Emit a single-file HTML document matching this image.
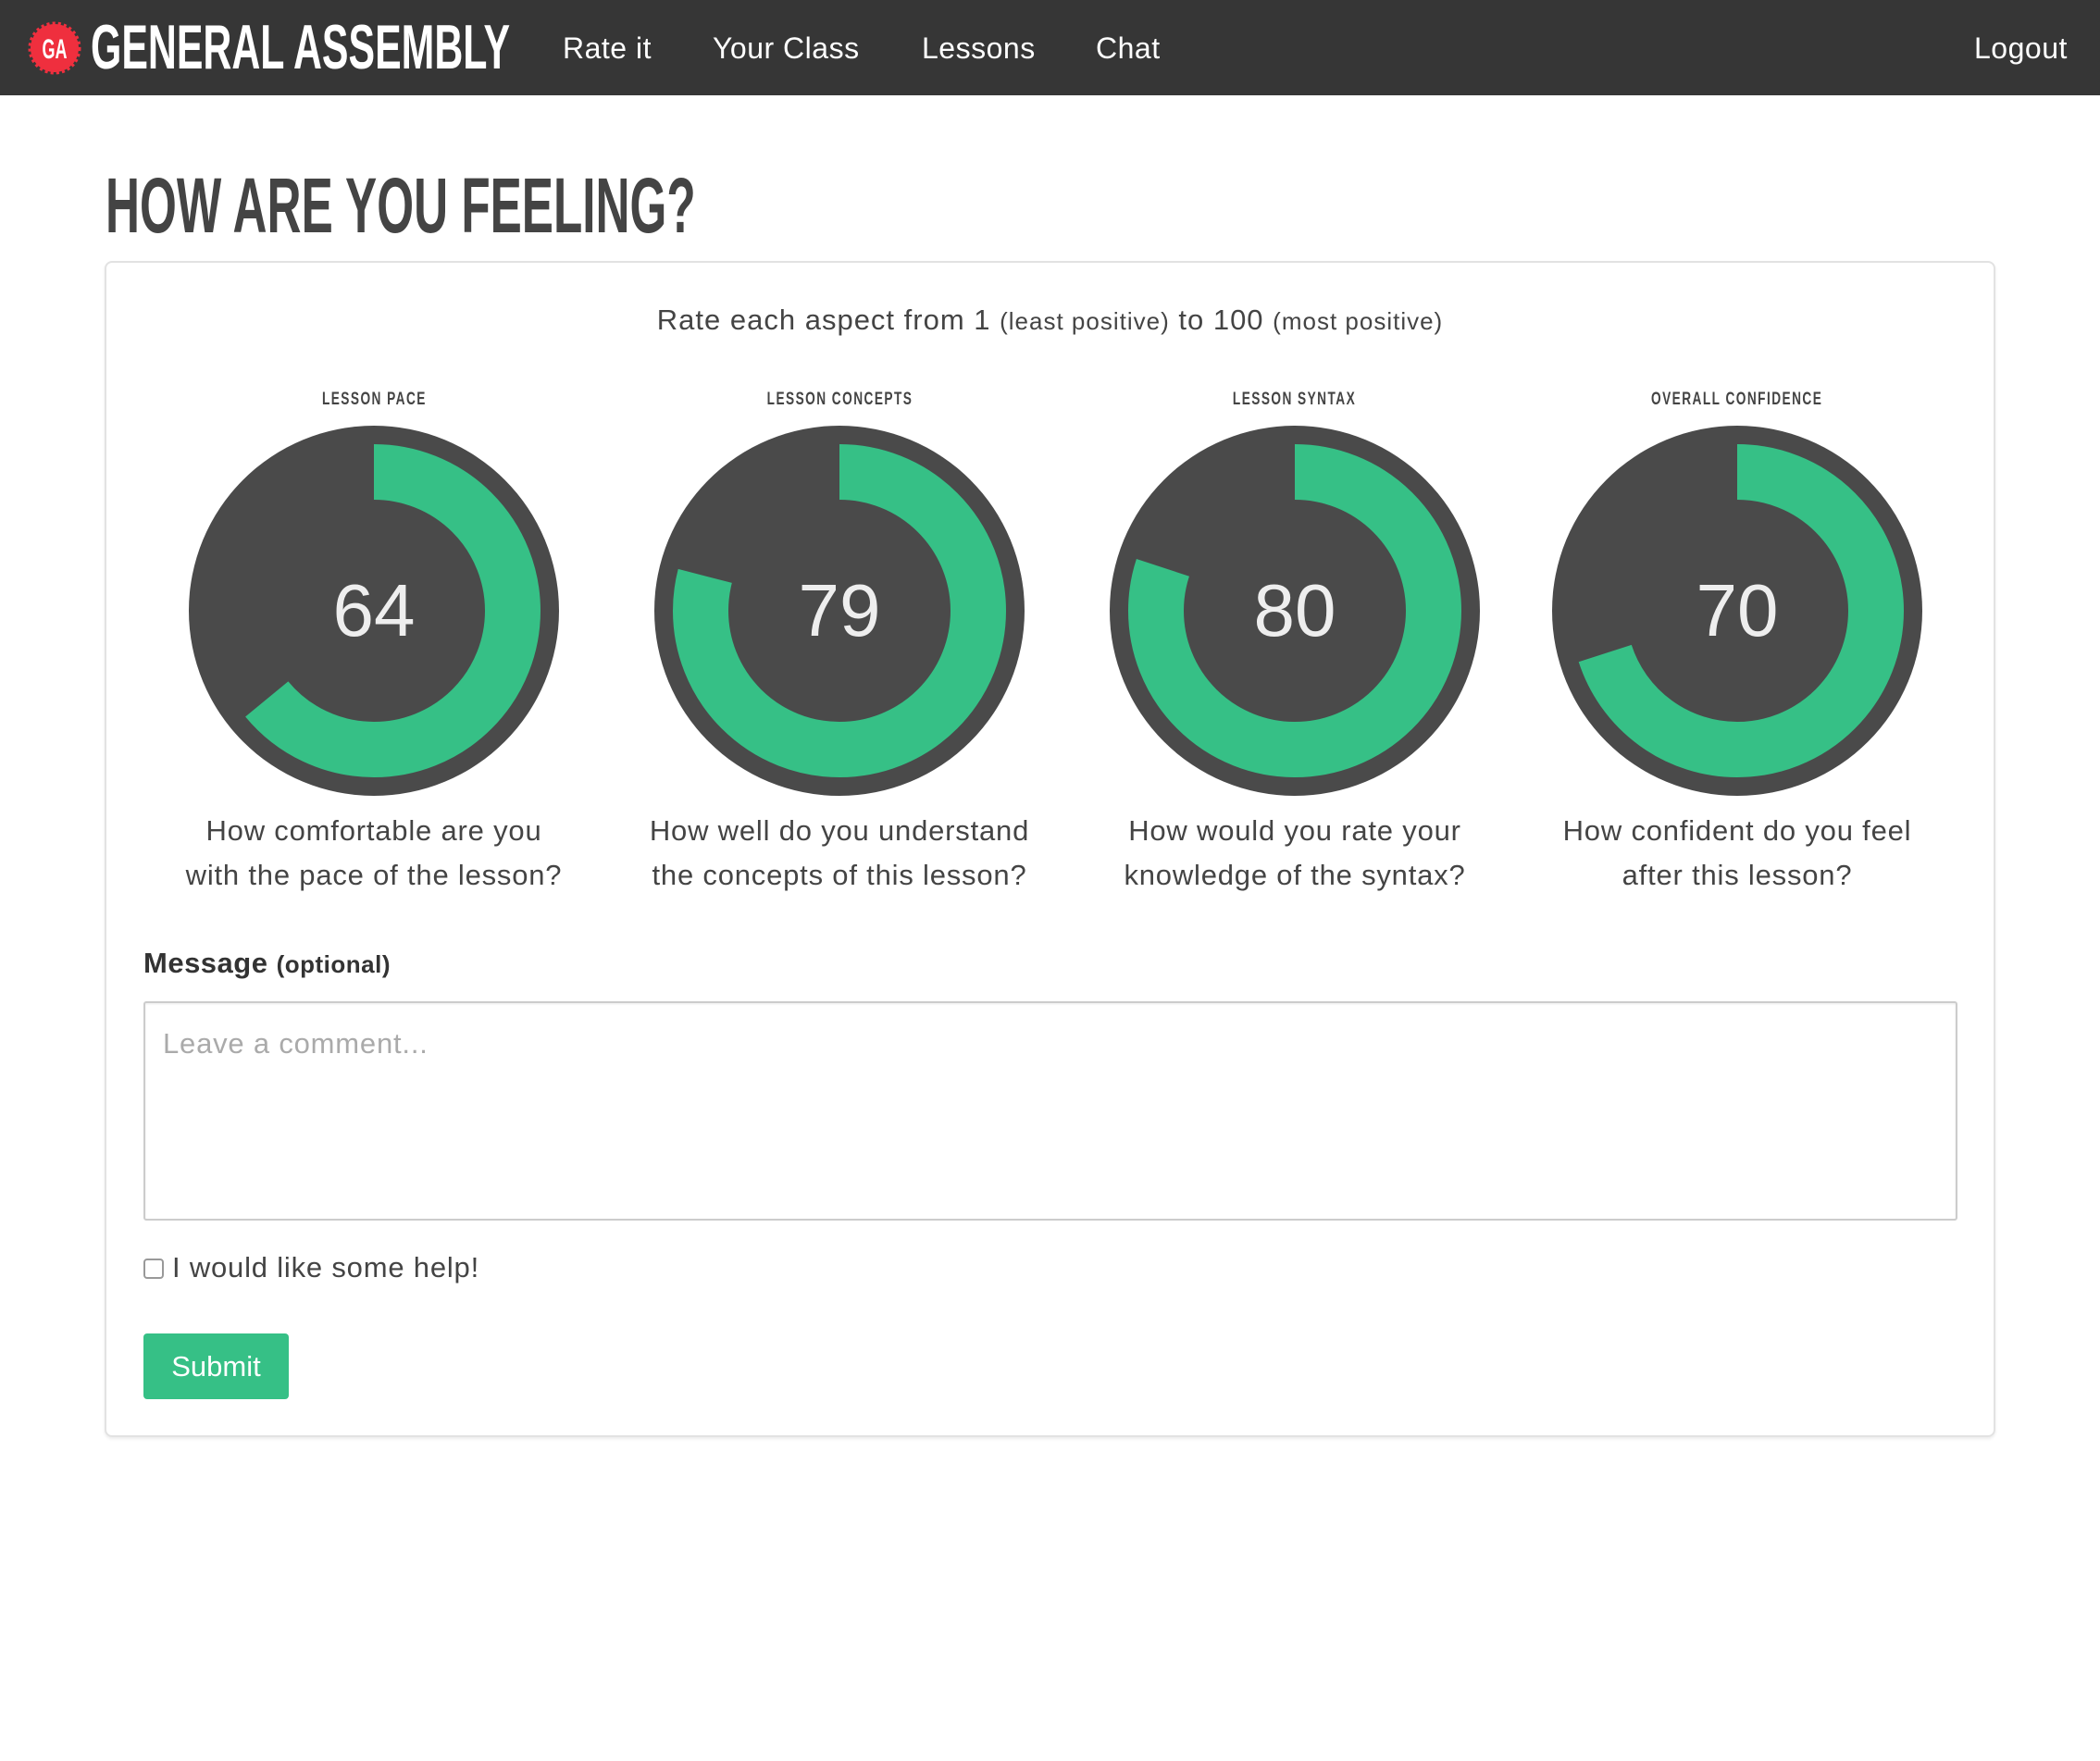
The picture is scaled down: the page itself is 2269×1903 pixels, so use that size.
<!DOCTYPE html>
<html><head><meta charset="utf-8"><style>
*{box-sizing:border-box;margin:0;padding:0}
body{width:2269px;height:1903px;background:#fff;font-family:"Liberation Sans","DejaVu Sans",sans-serif;color:#333;position:relative;overflow:hidden}
.nav{position:absolute;left:0;top:0;width:2269px;height:103px;background:#363636}
.nav a{position:absolute;top:34px;color:#fff;font-size:32px;text-decoration:none;letter-spacing:0.5px}
.cond{display:inline-block;font-weight:bold;transform-origin:left center;white-space:nowrap}
.abs{position:absolute}
.panel{position:absolute;left:113px;top:282px;width:2043px;height:1271px;border:2px solid #e2e2e2;border-radius:8px;box-shadow:0 2px 3px rgba(0,0,0,.08)}
.lbl{position:absolute;width:500px;text-align:center;font-size:19px;font-weight:bold;color:#444;letter-spacing:2px}
.lbl span{display:inline-block;transform:scaleX(0.72)}
.q{position:absolute;width:500px;text-align:center;font-size:31px;line-height:48px;color:#444;letter-spacing:0.8px}
</style></head><body>
<div class="nav">
<svg class="abs" style="left:30px;top:23px" width="58" height="58" viewBox="0 0 58 58">
<circle cx="29" cy="29" r="26" fill="#ef2f3e" stroke="#ef2f3e" stroke-width="5" stroke-dasharray="3 3"/>
<text x="29" y="40" text-anchor="middle" fill="#fff" font-family="Liberation Sans" font-weight="bold" font-size="30" transform="translate(29 0) scale(0.6 1) translate(-29 0)">GA</text></svg>
<div class="abs" style="left:98px;top:14px;color:#fff;font-size:68px;line-height:74px"><span class="cond" style="transform:scaleX(0.63)">GENERAL ASSEMBLY</span></div>
<a style="left:608px">Rate it</a><a style="left:770px">Your Class</a><a style="left:996px">Lessons</a><a style="left:1184px">Chat</a><a style="left:2133px">Logout</a>
</div>
<div class="abs" style="left:114px;top:180px;color:#444;font-size:84px;line-height:84px"><span class="cond" style="transform:scaleX(0.61)">HOW ARE YOU FEELING?</span></div>
<div class="panel"></div>
<div class="abs" style="left:0;width:2269px;top:328px;text-align:center;font-size:31px;color:#444;letter-spacing:1px">Rate each aspect from 1 <span style="font-size:26px">(least positive)</span> to 100 <span style="font-size:26px">(most positive)</span></div>

<div class="lbl" style="left:154px;top:421px"><span>LESSON PACE</span></div>
<div class="lbl" style="left:657px;top:421px"><span>LESSON CONCEPTS</span></div>
<div class="lbl" style="left:1149px;top:421px"><span>LESSON SYNTAX</span></div>
<div class="lbl" style="left:1627px;top:421px"><span>OVERALL CONFIDENCE</span></div>

<svg class="abs" style="left:204px;top:460px" width="400" height="400"><circle cx="200" cy="200" r="200" fill="#4a4a4a"/><circle cx="200" cy="200" r="150" fill="none" stroke="#36c086" stroke-width="60" stroke-dasharray="603.2 1000" transform="rotate(-90 200 200)"/><text x="200" y="227" text-anchor="middle" fill="#eee" font-size="80" font-family="Liberation Sans">64</text></svg>
<svg class="abs" style="left:707px;top:460px" width="400" height="400"><circle cx="200" cy="200" r="200" fill="#4a4a4a"/><circle cx="200" cy="200" r="150" fill="none" stroke="#36c086" stroke-width="60" stroke-dasharray="744.6 1000" transform="rotate(-90 200 200)"/><text x="200" y="227" text-anchor="middle" fill="#eee" font-size="80" font-family="Liberation Sans">79</text></svg>
<svg class="abs" style="left:1199px;top:460px" width="400" height="400"><circle cx="200" cy="200" r="200" fill="#4a4a4a"/><circle cx="200" cy="200" r="150" fill="none" stroke="#36c086" stroke-width="60" stroke-dasharray="754 1000" transform="rotate(-90 200 200)"/><text x="200" y="227" text-anchor="middle" fill="#eee" font-size="80" font-family="Liberation Sans">80</text></svg>
<svg class="abs" style="left:1677px;top:460px" width="400" height="400"><circle cx="200" cy="200" r="200" fill="#4a4a4a"/><circle cx="200" cy="200" r="150" fill="none" stroke="#36c086" stroke-width="60" stroke-dasharray="659.7 1000" transform="rotate(-90 200 200)"/><text x="200" y="227" text-anchor="middle" fill="#eee" font-size="80" font-family="Liberation Sans">70</text></svg>

<div class="q" style="left:154px;top:874px">How comfortable are you<br>with the pace of the lesson?</div>
<div class="q" style="left:657px;top:874px">How well do you understand<br>the concepts of this lesson?</div>
<div class="q" style="left:1149px;top:874px">How would you rate your<br>knowledge of the syntax?</div>
<div class="q" style="left:1627px;top:874px">How confident do you feel<br>after this lesson?</div>

<div class="abs" style="left:155px;top:1023px;font-size:31px;font-weight:bold;color:#333;letter-spacing:0.5px">Message <span style="font-size:26px">(optional)</span></div>
<div class="abs" style="left:155px;top:1082px;width:1960px;height:237px;border:2px solid #ccc;border-radius:3px;box-shadow:inset 0 1px 2px rgba(0,0,0,.08)"></div>
<div class="abs" style="left:176px;top:1110px;font-size:31px;color:#aaa;letter-spacing:0.8px">Leave a comment...</div>
<div class="abs" style="left:155px;top:1360px;width:22px;height:22px;border:2px solid #999;border-radius:4px"></div>
<div class="abs" style="left:186px;top:1352px;font-size:31px;color:#444;letter-spacing:0.8px">I would like some help!</div>
<div class="abs" style="left:155px;top:1441px;width:157px;height:71px;background:#36c086;border-radius:4px;color:#fff;font-size:31px;line-height:71px;text-align:center">Submit</div>
</body></html>
